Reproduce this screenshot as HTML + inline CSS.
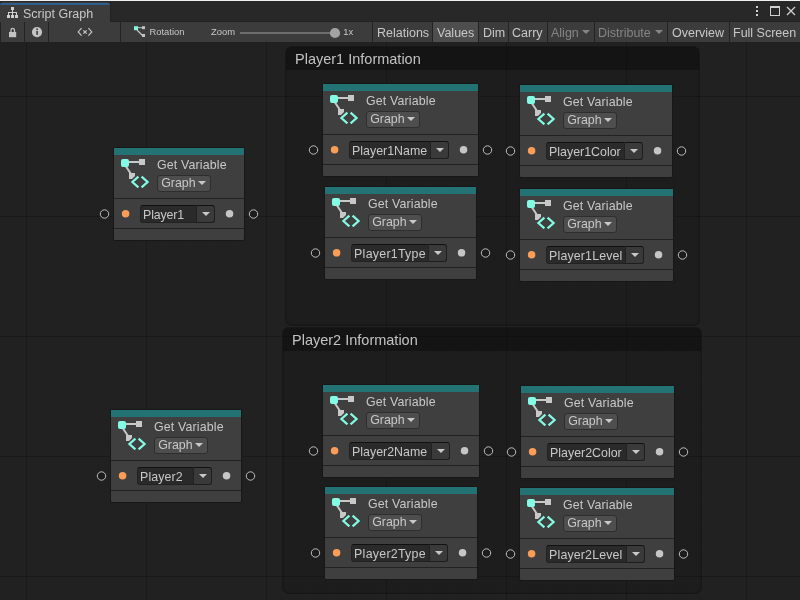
<!DOCTYPE html><html><head><meta charset="utf-8"><style>

*{margin:0;padding:0;box-sizing:border-box}
html,body{width:800px;height:600px;overflow:hidden;background:#202020;font-family:"Liberation Sans", sans-serif}
#root{position:absolute;left:0;top:0;width:800px;height:600px;will-change:transform;background:#202020}
.abs{position:absolute}
#canvas{position:absolute;left:0;top:0;width:800px;height:600px;background-color:#212121;
 background-image:
  linear-gradient(to right, rgba(0,0,0,0.19) 0 1px, transparent 1px),
  linear-gradient(to bottom, rgba(0,0,0,0.19) 0 1px, transparent 1px),
  linear-gradient(to right, rgba(0,0,0,0.035) 0 1px, transparent 1px),
  linear-gradient(to bottom, rgba(0,0,0,0.035) 0 1px, transparent 1px);
 background-size:120px 600px, 800px 120px, 12px 600px, 800px 12px;
 background-position: 26px 0, 0 96px, 2px 0, 0 0;
}
.grp{position:absolute;border:1px solid rgba(0,0,0,0.22);border-radius:7px;background:rgba(0,0,0,0.10);overflow:hidden;box-shadow:inset 0 0 3px rgba(0,0,0,0.25)}
.grp .gh{position:absolute;left:0;top:0;right:0;height:23px;background:rgba(0,0,0,0.28)}
.grp .gt{position:absolute;left:9px;top:4px;font-size:14.5px;color:#c2c2c2;white-space:nowrap}
.node{position:absolute;border:1px solid #171717;border-radius:2px;background:#3f3f3f;box-sizing:content-box}
.node>div,.node>svg{position:absolute}
.teal{left:0;top:0;right:0;height:7px;background:#237375}
.sep{left:0;right:0;height:1px;background:#222}
.gv{left:43px;top:10px;letter-spacing:0.15px;font-size:12.4px;color:#c8c8c8;white-space:nowrap}
.gdd{left:43px;top:27px;width:54px;height:17px;background:#4e4e4e;border:1px solid #2e2e2e;border-radius:3px}
.gdd span{position:absolute;left:3.2px;top:0px;font-size:12.4px;color:#c8c8c8;white-space:nowrap}
.tri{position:absolute;width:0;height:0;border-left:4px solid transparent;border-right:4px solid transparent;border-top:4px solid #c8c8c8}
.fld{top:57px;height:18px;background:#2a2a2a;border:1px solid #222;border-top-color:#111;border-radius:3px 0 0 3px}
.fld span{position:absolute;left:1.8px;top:2px;font-size:12.4px;color:#c8c8c8;white-space:nowrap}
.btn{top:57px;width:17.5px;height:18px;background:#3a3a3a;border:1px solid #1e1e1e;border-top-color:#111;border-left:none;border-radius:0 3px 3px 0}
.dot{top:62px;width:8px;height:8px;border-radius:50%}
.dot.o{background:#f2964f}
.dot.w{background:#cfcfcf}
.port{position:absolute;width:11px;height:11px;border:1.2px solid #c8c8c8;border-radius:50%}
#tabbar{position:absolute;left:0;top:0;width:800px;height:22px;background:#282828}
#topline{position:absolute;left:0;top:0;width:800px;height:1px;background:#f0f0f0}
#tab{position:absolute;left:0;top:2px;width:110px;height:20px;background:#3c3c3c;border-radius:3px 3px 0 0}
#tabblue{position:absolute;left:0;top:3px;width:110px;height:2px;background:#2c5f8e;border-radius:2px 2px 0 0}
#toolbar{position:absolute;left:0;top:22px;width:800px;height:20px;background:#3c3c3c}
.vs{position:absolute;top:22px;width:1px;height:20px;background:#232323}
.tt{position:absolute;font-size:12.5px;color:#c8c8c8;white-space:nowrap}
.dis{color:#858585}

</style></head><body><div id="root">
<div id="canvas"></div>
<div class="grp" style="left:285px;top:46px;width:415px;height:280px"><div class="gh"></div><div class="gt">Player1 Information</div></div>
<div class="grp" style="left:282px;top:327px;width:420px;height:267px"><div class="gh"></div><div class="gt">Player2 Information</div></div>
<div class="node" style="left:113px;top:147px;width:130px;height:92px">
<div class="teal"></div>
<div class="hdr"></div>
<div class="sep" style="top:50px"></div>
<div class="sep" style="top:80px"></div>
<svg class="ico" width="32" height="30" viewBox="0 0 32 30" style="left:6px;top:10px">
<line x1="5" y1="7" x2="11" y2="16" stroke="#c8c8c8" stroke-width="2"/>
<rect x="9" y="3" width="10" height="2" fill="#c8c8c8"/>
<rect x="1" y="1" width="8" height="8" rx="2" fill="#84fbe4"/>
<rect x="19" y="1" width="6" height="6" fill="#c8c8c8"/>
<path d="M9 15 H15 V18 L12 21 H9 Z" fill="#c8c8c8"/>
<path d="M18.4 18.6 L12.4 24 L18.4 29.4" fill="none" stroke="#84fbe4" stroke-width="2.2"/>
<path d="M21.6 18.6 L27.6 24 L21.6 29.4" fill="none" stroke="#84fbe4" stroke-width="2.2"/>
</svg>
<div class="gv">Get Variable</div>
<div class="gdd"><span>Graph</span><i class="tri" style="left:39.5px;top:5px"></i></div>
<div class="fld" style="left:26.30000000000001px;width:56.69999999999999px"><span style="letter-spacing:-0.15px">Player1</span></div>
<div class="btn" style="left:83.0px"><i class="tri" style="left:5px;top:6px"></i></div>
</div>
<div class="node" style="left:322px;top:83px;width:155px;height:92px">
<div class="teal"></div>
<div class="hdr"></div>
<div class="sep" style="top:50px"></div>
<div class="sep" style="top:80px"></div>
<svg class="ico" width="32" height="30" viewBox="0 0 32 30" style="left:6px;top:10px">
<line x1="5" y1="7" x2="11" y2="16" stroke="#c8c8c8" stroke-width="2"/>
<rect x="9" y="3" width="10" height="2" fill="#c8c8c8"/>
<rect x="1" y="1" width="8" height="8" rx="2" fill="#84fbe4"/>
<rect x="19" y="1" width="6" height="6" fill="#c8c8c8"/>
<path d="M9 15 H15 V18 L12 21 H9 Z" fill="#c8c8c8"/>
<path d="M18.4 18.6 L12.4 24 L18.4 29.4" fill="none" stroke="#84fbe4" stroke-width="2.2"/>
<path d="M21.6 18.6 L27.6 24 L21.6 29.4" fill="none" stroke="#84fbe4" stroke-width="2.2"/>
</svg>
<div class="gv">Get Variable</div>
<div class="gdd"><span>Graph</span><i class="tri" style="left:39.5px;top:5px"></i></div>
<div class="fld" style="left:26.30000000000001px;width:81.69999999999999px"><span style="letter-spacing:0px">Player1Name</span></div>
<div class="btn" style="left:108.0px"><i class="tri" style="left:5px;top:6px"></i></div>
</div>
<div class="node" style="left:519px;top:84px;width:152px;height:92px">
<div class="teal"></div>
<div class="hdr"></div>
<div class="sep" style="top:50px"></div>
<div class="sep" style="top:80px"></div>
<svg class="ico" width="32" height="30" viewBox="0 0 32 30" style="left:6px;top:10px">
<line x1="5" y1="7" x2="11" y2="16" stroke="#c8c8c8" stroke-width="2"/>
<rect x="9" y="3" width="10" height="2" fill="#c8c8c8"/>
<rect x="1" y="1" width="8" height="8" rx="2" fill="#84fbe4"/>
<rect x="19" y="1" width="6" height="6" fill="#c8c8c8"/>
<path d="M9 15 H15 V18 L12 21 H9 Z" fill="#c8c8c8"/>
<path d="M18.4 18.6 L12.4 24 L18.4 29.4" fill="none" stroke="#84fbe4" stroke-width="2.2"/>
<path d="M21.6 18.6 L27.6 24 L21.6 29.4" fill="none" stroke="#84fbe4" stroke-width="2.2"/>
</svg>
<div class="gv">Get Variable</div>
<div class="gdd"><span>Graph</span><i class="tri" style="left:39.5px;top:5px"></i></div>
<div class="fld" style="left:26.299999999999955px;width:78.70000000000005px"><span style="letter-spacing:0px">Player1Color</span></div>
<div class="btn" style="left:105.0px"><i class="tri" style="left:5px;top:6px"></i></div>
</div>
<div class="node" style="left:324px;top:186px;width:151px;height:92px">
<div class="teal"></div>
<div class="hdr"></div>
<div class="sep" style="top:50px"></div>
<div class="sep" style="top:80px"></div>
<svg class="ico" width="32" height="30" viewBox="0 0 32 30" style="left:6px;top:10px">
<line x1="5" y1="7" x2="11" y2="16" stroke="#c8c8c8" stroke-width="2"/>
<rect x="9" y="3" width="10" height="2" fill="#c8c8c8"/>
<rect x="1" y="1" width="8" height="8" rx="2" fill="#84fbe4"/>
<rect x="19" y="1" width="6" height="6" fill="#c8c8c8"/>
<path d="M9 15 H15 V18 L12 21 H9 Z" fill="#c8c8c8"/>
<path d="M18.4 18.6 L12.4 24 L18.4 29.4" fill="none" stroke="#84fbe4" stroke-width="2.2"/>
<path d="M21.6 18.6 L27.6 24 L21.6 29.4" fill="none" stroke="#84fbe4" stroke-width="2.2"/>
</svg>
<div class="gv">Get Variable</div>
<div class="gdd"><span>Graph</span><i class="tri" style="left:39.5px;top:5px"></i></div>
<div class="fld" style="left:26.30000000000001px;width:77.69999999999999px"><span style="letter-spacing:0.26px">Player1Type</span></div>
<div class="btn" style="left:104.0px"><i class="tri" style="left:5px;top:6px"></i></div>
</div>
<div class="node" style="left:519px;top:188px;width:153px;height:92px">
<div class="teal"></div>
<div class="hdr"></div>
<div class="sep" style="top:50px"></div>
<div class="sep" style="top:80px"></div>
<svg class="ico" width="32" height="30" viewBox="0 0 32 30" style="left:6px;top:10px">
<line x1="5" y1="7" x2="11" y2="16" stroke="#c8c8c8" stroke-width="2"/>
<rect x="9" y="3" width="10" height="2" fill="#c8c8c8"/>
<rect x="1" y="1" width="8" height="8" rx="2" fill="#84fbe4"/>
<rect x="19" y="1" width="6" height="6" fill="#c8c8c8"/>
<path d="M9 15 H15 V18 L12 21 H9 Z" fill="#c8c8c8"/>
<path d="M18.4 18.6 L12.4 24 L18.4 29.4" fill="none" stroke="#84fbe4" stroke-width="2.2"/>
<path d="M21.6 18.6 L27.6 24 L21.6 29.4" fill="none" stroke="#84fbe4" stroke-width="2.2"/>
</svg>
<div class="gv">Get Variable</div>
<div class="gdd"><span>Graph</span><i class="tri" style="left:39.5px;top:5px"></i></div>
<div class="fld" style="left:26.299999999999955px;width:79.70000000000005px"><span style="letter-spacing:0.15px">Player1Level</span></div>
<div class="btn" style="left:106.0px"><i class="tri" style="left:5px;top:6px"></i></div>
</div>
<div class="node" style="left:110px;top:409px;width:130px;height:92px">
<div class="teal"></div>
<div class="hdr"></div>
<div class="sep" style="top:50px"></div>
<div class="sep" style="top:80px"></div>
<svg class="ico" width="32" height="30" viewBox="0 0 32 30" style="left:6px;top:10px">
<line x1="5" y1="7" x2="11" y2="16" stroke="#c8c8c8" stroke-width="2"/>
<rect x="9" y="3" width="10" height="2" fill="#c8c8c8"/>
<rect x="1" y="1" width="8" height="8" rx="2" fill="#84fbe4"/>
<rect x="19" y="1" width="6" height="6" fill="#c8c8c8"/>
<path d="M9 15 H15 V18 L12 21 H9 Z" fill="#c8c8c8"/>
<path d="M18.4 18.6 L12.4 24 L18.4 29.4" fill="none" stroke="#84fbe4" stroke-width="2.2"/>
<path d="M21.6 18.6 L27.6 24 L21.6 29.4" fill="none" stroke="#84fbe4" stroke-width="2.2"/>
</svg>
<div class="gv">Get Variable</div>
<div class="gdd"><span>Graph</span><i class="tri" style="left:39.5px;top:5px"></i></div>
<div class="fld" style="left:26.30000000000001px;width:56.69999999999999px"><span style="letter-spacing:0.1px">Player2</span></div>
<div class="btn" style="left:83.0px"><i class="tri" style="left:5px;top:6px"></i></div>
</div>
<div class="node" style="left:322px;top:384px;width:156px;height:92px">
<div class="teal"></div>
<div class="hdr"></div>
<div class="sep" style="top:50px"></div>
<div class="sep" style="top:80px"></div>
<svg class="ico" width="32" height="30" viewBox="0 0 32 30" style="left:6px;top:10px">
<line x1="5" y1="7" x2="11" y2="16" stroke="#c8c8c8" stroke-width="2"/>
<rect x="9" y="3" width="10" height="2" fill="#c8c8c8"/>
<rect x="1" y="1" width="8" height="8" rx="2" fill="#84fbe4"/>
<rect x="19" y="1" width="6" height="6" fill="#c8c8c8"/>
<path d="M9 15 H15 V18 L12 21 H9 Z" fill="#c8c8c8"/>
<path d="M18.4 18.6 L12.4 24 L18.4 29.4" fill="none" stroke="#84fbe4" stroke-width="2.2"/>
<path d="M21.6 18.6 L27.6 24 L21.6 29.4" fill="none" stroke="#84fbe4" stroke-width="2.2"/>
</svg>
<div class="gv">Get Variable</div>
<div class="gdd"><span>Graph</span><i class="tri" style="left:39.5px;top:5px"></i></div>
<div class="fld" style="left:26.30000000000001px;width:82.69999999999999px"><span style="letter-spacing:0px">Player2Name</span></div>
<div class="btn" style="left:109.0px"><i class="tri" style="left:5px;top:6px"></i></div>
</div>
<div class="node" style="left:520px;top:385px;width:153px;height:92px">
<div class="teal"></div>
<div class="hdr"></div>
<div class="sep" style="top:50px"></div>
<div class="sep" style="top:80px"></div>
<svg class="ico" width="32" height="30" viewBox="0 0 32 30" style="left:6px;top:10px">
<line x1="5" y1="7" x2="11" y2="16" stroke="#c8c8c8" stroke-width="2"/>
<rect x="9" y="3" width="10" height="2" fill="#c8c8c8"/>
<rect x="1" y="1" width="8" height="8" rx="2" fill="#84fbe4"/>
<rect x="19" y="1" width="6" height="6" fill="#c8c8c8"/>
<path d="M9 15 H15 V18 L12 21 H9 Z" fill="#c8c8c8"/>
<path d="M18.4 18.6 L12.4 24 L18.4 29.4" fill="none" stroke="#84fbe4" stroke-width="2.2"/>
<path d="M21.6 18.6 L27.6 24 L21.6 29.4" fill="none" stroke="#84fbe4" stroke-width="2.2"/>
</svg>
<div class="gv">Get Variable</div>
<div class="gdd"><span>Graph</span><i class="tri" style="left:39.5px;top:5px"></i></div>
<div class="fld" style="left:26.299999999999955px;width:79.70000000000005px"><span style="letter-spacing:0px">Player2Color</span></div>
<div class="btn" style="left:106.0px"><i class="tri" style="left:5px;top:6px"></i></div>
</div>
<div class="node" style="left:324px;top:486px;width:152px;height:92px">
<div class="teal"></div>
<div class="hdr"></div>
<div class="sep" style="top:50px"></div>
<div class="sep" style="top:80px"></div>
<svg class="ico" width="32" height="30" viewBox="0 0 32 30" style="left:6px;top:10px">
<line x1="5" y1="7" x2="11" y2="16" stroke="#c8c8c8" stroke-width="2"/>
<rect x="9" y="3" width="10" height="2" fill="#c8c8c8"/>
<rect x="1" y="1" width="8" height="8" rx="2" fill="#84fbe4"/>
<rect x="19" y="1" width="6" height="6" fill="#c8c8c8"/>
<path d="M9 15 H15 V18 L12 21 H9 Z" fill="#c8c8c8"/>
<path d="M18.4 18.6 L12.4 24 L18.4 29.4" fill="none" stroke="#84fbe4" stroke-width="2.2"/>
<path d="M21.6 18.6 L27.6 24 L21.6 29.4" fill="none" stroke="#84fbe4" stroke-width="2.2"/>
</svg>
<div class="gv">Get Variable</div>
<div class="gdd"><span>Graph</span><i class="tri" style="left:39.5px;top:5px"></i></div>
<div class="fld" style="left:26.30000000000001px;width:78.69999999999999px"><span style="letter-spacing:0.26px">Player2Type</span></div>
<div class="btn" style="left:105.0px"><i class="tri" style="left:5px;top:6px"></i></div>
</div>
<div class="node" style="left:519px;top:487px;width:154px;height:92px">
<div class="teal"></div>
<div class="hdr"></div>
<div class="sep" style="top:50px"></div>
<div class="sep" style="top:80px"></div>
<svg class="ico" width="32" height="30" viewBox="0 0 32 30" style="left:6px;top:10px">
<line x1="5" y1="7" x2="11" y2="16" stroke="#c8c8c8" stroke-width="2"/>
<rect x="9" y="3" width="10" height="2" fill="#c8c8c8"/>
<rect x="1" y="1" width="8" height="8" rx="2" fill="#84fbe4"/>
<rect x="19" y="1" width="6" height="6" fill="#c8c8c8"/>
<path d="M9 15 H15 V18 L12 21 H9 Z" fill="#c8c8c8"/>
<path d="M18.4 18.6 L12.4 24 L18.4 29.4" fill="none" stroke="#84fbe4" stroke-width="2.2"/>
<path d="M21.6 18.6 L27.6 24 L21.6 29.4" fill="none" stroke="#84fbe4" stroke-width="2.2"/>
</svg>
<div class="gv">Get Variable</div>
<div class="gdd"><span>Graph</span><i class="tri" style="left:39.5px;top:5px"></i></div>
<div class="fld" style="left:26.299999999999955px;width:80.70000000000005px"><span style="letter-spacing:0.15px">Player2Level</span></div>
<div class="btn" style="left:107.0px"><i class="tri" style="left:5px;top:6px"></i></div>
</div>
<svg class="abs" style="left:0;top:0" width="800" height="600"><circle cx="125.6" cy="213.8" r="3.75" fill="#fb9d56"/><circle cx="229.55" cy="213.8" r="3.75" fill="#c6c6c6"/><circle cx="104.5" cy="214" r="4.2" fill="#1c1c1c" stroke="#c4c4c4" stroke-width="0.95"/><circle cx="253.5" cy="214" r="4.2" fill="#1c1c1c" stroke="#c4c4c4" stroke-width="0.95"/><circle cx="334.6" cy="149.8" r="3.75" fill="#fb9d56"/><circle cx="463.55" cy="149.8" r="3.75" fill="#c6c6c6"/><circle cx="313.5" cy="150" r="4.2" fill="#1c1c1c" stroke="#c4c4c4" stroke-width="0.95"/><circle cx="487.5" cy="150" r="4.2" fill="#1c1c1c" stroke="#c4c4c4" stroke-width="0.95"/><circle cx="531.6" cy="150.8" r="3.75" fill="#fb9d56"/><circle cx="657.55" cy="150.8" r="3.75" fill="#c6c6c6"/><circle cx="510.5" cy="151" r="4.2" fill="#1c1c1c" stroke="#c4c4c4" stroke-width="0.95"/><circle cx="681.5" cy="151" r="4.2" fill="#1c1c1c" stroke="#c4c4c4" stroke-width="0.95"/><circle cx="336.6" cy="252.8" r="3.75" fill="#fb9d56"/><circle cx="461.55" cy="252.8" r="3.75" fill="#c6c6c6"/><circle cx="315.5" cy="253" r="4.2" fill="#1c1c1c" stroke="#c4c4c4" stroke-width="0.95"/><circle cx="485.5" cy="253" r="4.2" fill="#1c1c1c" stroke="#c4c4c4" stroke-width="0.95"/><circle cx="531.6" cy="254.8" r="3.75" fill="#fb9d56"/><circle cx="658.55" cy="254.8" r="3.75" fill="#c6c6c6"/><circle cx="510.5" cy="255" r="4.2" fill="#1c1c1c" stroke="#c4c4c4" stroke-width="0.95"/><circle cx="682.5" cy="255" r="4.2" fill="#1c1c1c" stroke="#c4c4c4" stroke-width="0.95"/><circle cx="122.6" cy="475.8" r="3.75" fill="#fb9d56"/><circle cx="226.55" cy="475.8" r="3.75" fill="#c6c6c6"/><circle cx="101.5" cy="476" r="4.2" fill="#1c1c1c" stroke="#c4c4c4" stroke-width="0.95"/><circle cx="250.5" cy="476" r="4.2" fill="#1c1c1c" stroke="#c4c4c4" stroke-width="0.95"/><circle cx="334.6" cy="450.8" r="3.75" fill="#fb9d56"/><circle cx="464.55" cy="450.8" r="3.75" fill="#c6c6c6"/><circle cx="313.5" cy="451" r="4.2" fill="#1c1c1c" stroke="#c4c4c4" stroke-width="0.95"/><circle cx="488.5" cy="451" r="4.2" fill="#1c1c1c" stroke="#c4c4c4" stroke-width="0.95"/><circle cx="532.6" cy="451.8" r="3.75" fill="#fb9d56"/><circle cx="659.55" cy="451.8" r="3.75" fill="#c6c6c6"/><circle cx="511.5" cy="452" r="4.2" fill="#1c1c1c" stroke="#c4c4c4" stroke-width="0.95"/><circle cx="683.5" cy="452" r="4.2" fill="#1c1c1c" stroke="#c4c4c4" stroke-width="0.95"/><circle cx="336.6" cy="552.8" r="3.75" fill="#fb9d56"/><circle cx="462.55" cy="552.8" r="3.75" fill="#c6c6c6"/><circle cx="315.5" cy="553" r="4.2" fill="#1c1c1c" stroke="#c4c4c4" stroke-width="0.95"/><circle cx="486.5" cy="553" r="4.2" fill="#1c1c1c" stroke="#c4c4c4" stroke-width="0.95"/><circle cx="531.6" cy="553.8" r="3.75" fill="#fb9d56"/><circle cx="659.55" cy="553.8" r="3.75" fill="#c6c6c6"/><circle cx="510.5" cy="554" r="4.2" fill="#1c1c1c" stroke="#c4c4c4" stroke-width="0.95"/><circle cx="683.5" cy="554" r="4.2" fill="#1c1c1c" stroke="#c4c4c4" stroke-width="0.95"/></svg>
<div id="tabbar"></div><div id="topline"></div><div id="tab"></div><div id="tabblue"></div><div class="abs" style="left:110px;top:2px;width:1px;height:20px;background:#222"></div><div class="abs" style="left:110px;top:21px;width:690px;height:1px;background:#232323"></div>
<svg class="abs" style="left:0;top:0" width="24" height="22" viewBox="0 0 24 22">
<rect x="11" y="7" width="3" height="3" fill="#d0d0d0"/>
<rect x="12" y="10" width="1" height="2" fill="#d0d0d0"/>
<rect x="8" y="12" width="9" height="1" fill="#d0d0d0"/>
<rect x="8" y="13" width="1" height="2" fill="#d0d0d0"/>
<rect x="12" y="13" width="1" height="2" fill="#d0d0d0"/>
<rect x="16" y="13" width="1" height="2" fill="#d0d0d0"/>
<rect x="7" y="15" width="3" height="3" fill="#d0d0d0"/>
<rect x="11" y="15" width="3" height="3" fill="#d0d0d0"/>
<rect x="15" y="15" width="3" height="3" fill="#d0d0d0"/>
</svg>
<div class="tt" style="left:23px;top:6.5px;font-size:12.5px">Script Graph</div>
<svg class="abs" style="left:750px;top:0" width="50" height="22" viewBox="0 0 50 22">
<rect x="6" y="6" width="2" height="2" fill="#d0d0d0"/>
<rect x="6" y="10" width="2" height="2" fill="#d0d0d0"/>
<rect x="6" y="14" width="2" height="2" fill="#d0d0d0"/>
<rect x="20.5" y="6.5" width="9" height="9" fill="none" stroke="#d0d0d0" stroke-width="1"/>
<rect x="20" y="6" width="10" height="2" fill="#d0d0d0"/>
<path d="M37 7 L45 15 M45 7 L37 15" stroke="#d0d0d0" stroke-width="1.3"/>
</svg>
<div id="toolbar"></div>
<div class="abs" style="left:433px;top:22px;width:45px;height:20px;background:#4e4e4e"></div>
<div class="vs" style="left:0px"></div>
<div class="vs" style="left:24px"></div>
<div class="vs" style="left:48px"></div>
<div class="vs" style="left:120px"></div>
<div class="vs" style="left:372px"></div>
<div class="vs" style="left:432px"></div>
<div class="vs" style="left:478px"></div>
<div class="vs" style="left:508px"></div>
<div class="vs" style="left:547px"></div>
<div class="vs" style="left:594px"></div>
<div class="vs" style="left:667px"></div>
<div class="vs" style="left:729px"></div>
<svg class="abs" style="left:0;top:22px" width="372" height="20" viewBox="0 0 372 20">
<path d="M11 10.2 V8.2 A1.75 1.75 0 0 1 14.5 8.2 V10.2" fill="none" stroke="#c4c4c4" stroke-width="1.3"/>
<rect x="9" y="10" width="7.2" height="5.2" fill="#c4c4c4"/>
<circle cx="37" cy="10.1" r="5.1" fill="#c4c4c4"/>
<rect x="36.3" y="6.4" width="1.6" height="1.5" fill="#3c3c3c"/>
<rect x="36.3" y="8.9" width="1.6" height="3.9" fill="#3c3c3c"/>
<path d="M81.6 6.2 L78.2 9.9 L81.6 13.6 M88.4 6.2 L91.8 9.9 L88.4 13.6 M83.3 8.3 L86.7 11.7 M86.7 8.3 L83.3 11.7" fill="none" stroke="#c4c4c4" stroke-width="1.2"/>
<rect x="134" y="4.2" width="4" height="4" fill="#80f5df"/>
<rect x="142" y="4.2" width="3" height="3" fill="#c4c4c4"/>
<rect x="138" y="5.2" width="4" height="1" fill="#c4c4c4"/>
<line x1="137" y1="8" x2="143" y2="14" stroke="#c4c4c4" stroke-width="1.2"/>
<rect x="142" y="12" width="3" height="3" fill="#c4c4c4"/>
<rect x="240" y="10" width="92" height="2" fill="#6e6e6e"/>
<circle cx="335" cy="11" r="5.1" fill="#a3a3a3"/>
</svg>
<div class="tt" style="left:149.5px;top:26px;font-size:9.4px">Rotation</div>
<div class="tt" style="left:211px;top:26px;font-size:9.4px">Zoom</div>
<div class="tt" style="left:343.2px;top:26px;font-size:9.4px">1x</div>
<div class="tt " style="left:377px;top:26px">Relations</div>
<div class="tt " style="left:437px;top:26px">Values</div>
<div class="tt " style="left:483px;top:26px">Dim</div>
<div class="tt " style="left:512px;top:26px">Carry</div>
<div class="tt dis" style="left:551px;top:26px">Align</div>
<div class="tt dis" style="left:598px;top:26px">Distribute</div>
<div class="tt " style="left:672px;top:26px">Overview</div>
<div class="tt " style="left:733px;top:26px">Full Screen</div>
<div class="tri" style="left:582px;top:30px;border-top-color:#858585"></div>
<div class="tri" style="left:655px;top:30px;border-top-color:#858585"></div>
</div></body></html>
